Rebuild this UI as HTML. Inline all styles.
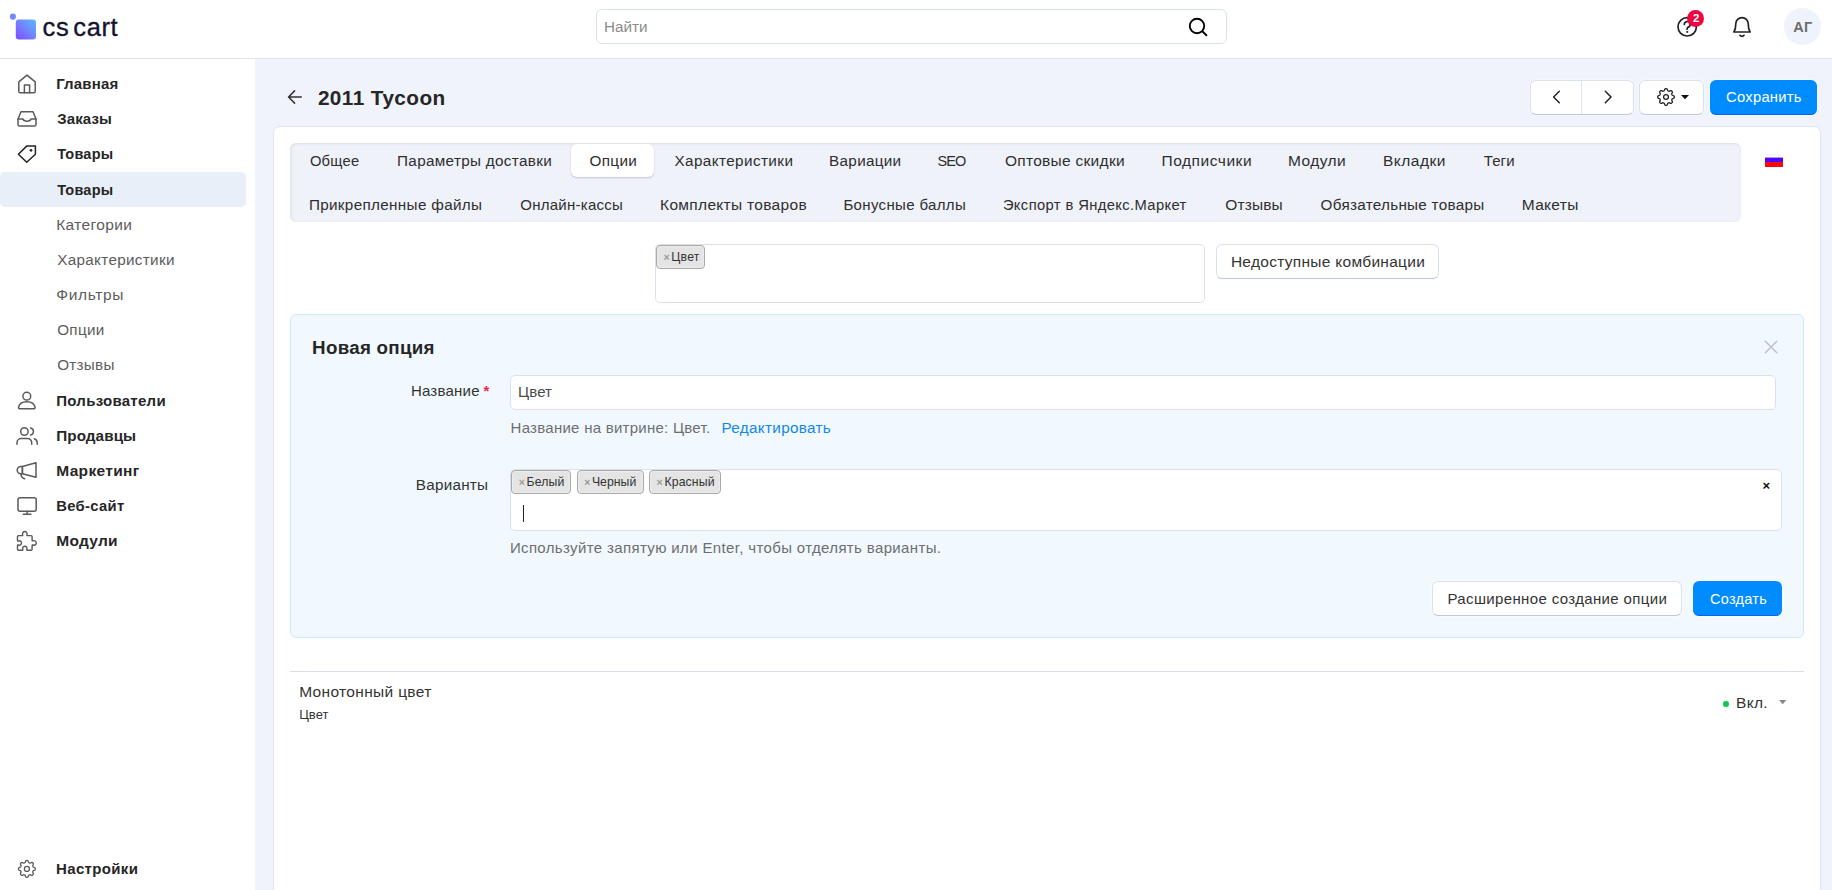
<!DOCTYPE html>
<html lang="ru">
<head>
<meta charset="utf-8">
<title>2011 Tycoon — Товары</title>
<style>
*{box-sizing:border-box;margin:0;padding:0}
html,body{width:1832px;height:890px;overflow:hidden}
body{position:relative;background:#f0f3fb;font-family:"Liberation Sans",sans-serif;font-size:15px;color:#333}
.t{position:absolute;line-height:1;white-space:pre;display:block;text-decoration:none}
.b{position:absolute;display:block}
.ic{position:absolute;display:block;overflow:visible}
ul{list-style:none}
.topbar{left:0;top:0;width:1832px;height:59px;background:#fff;border-bottom:1px solid #dde3f3}
.sidebar{left:0;top:59px;width:255px;height:831px;background:#fff}
.logo-t{-webkit-text-stroke:.35px #14142f}
.search{left:596px;top:9px;width:631px;height:35px;background:#fff;border:1px solid #d9e0f2;border-radius:6px}
.badge{left:1687.200px;top:9.900px;width:16.800px;height:16.800px;border-radius:50%;background:#f0043f}
.avatar{left:1784.200px;top:8.100px;width:36.600px;height:36.600px;border-radius:50%;background:#eff3fb}
.nav-active{left:0;top:172px;width:246px;height:35px;border-radius:5px;background:#e9eff9}
.btn{background:#fff;border:1px solid #dbe0f1;border-bottom-color:#bcc6e6;border-radius:6px;box-shadow:0 0 0 1px rgba(255,255,255,.35)}
.btn-primary{background:#008cff;border-radius:6px;border-bottom:1px solid #0064f6;box-shadow:0 0 0 1px rgba(255,255,255,.45)}
.card{left:273px;top:126px;width:1548px;height:790px;background:#fff;border:1px solid #dfe4f3;border-radius:7px}
.tabs{left:290px;top:143px;width:1451px;height:79px;background:#f0f2fa;border-radius:6px;box-shadow:inset 1px 1px 3px rgba(40,50,90,.10)}
.tab-active{left:571px;top:144px;width:83px;height:33px;background:#fff;border-radius:6px;box-shadow:0 1px 2px rgba(90,110,190,.35)}
.field{background:#fff;border:1px solid #dbe0f1;border-radius:5px}
.chip{background:#e4e4e4;border:1px solid #aaa;border-radius:4px;box-shadow:inset 0 0 2px #fff}
.panel{left:290px;top:314px;width:1514px;height:324px;background:#f1f9ff;border:1px solid #cbe9fb;border-radius:6px}
.hr{left:290px;top:671px;width:1514px;height:1px;background:#d8def0}
</style>
</head>
<body>

<header>
  <div class="b topbar"></div>
  <a class="brand">
    <svg class="ic" style="left:8px;top:12px" width="30" height="30" viewBox="8 12 30 30"><defs><linearGradient id="lg" x1="0" y1="1" x2="1" y2="0"><stop offset="0" stop-color="#8048ff"/><stop offset=".5" stop-color="#7383ff"/><stop offset="1" stop-color="#58baff"/></linearGradient></defs><circle cx="12.900" cy="16.650" r="3.050" fill="#6d8bff"/><rect x="15.800" y="19.400" width="20.200" height="20.100" rx="3" fill="url(#lg)"/></svg>
    <span class="t logo-t" style="left:42.6px;top:15px;font-size:25.5px;letter-spacing:0.58px;color:#14142f;word-spacing:-3.6px">cs cart</span>
  </a>
  <form role="search">
    <div class="b search"></div>
    <label class="t" style="left:604.0px;top:19px;font-size:15.25px;letter-spacing:0.03px;color:#8c8c8c">Найти</label>
    <svg class="ic" style="left:1184px;top:14px" width="28" height="26" viewBox="1184 14 28 26" fill="none" stroke="#000" stroke-width="1.9" stroke-linecap="round"><circle cx="1197" cy="26" r="7.200"/><path d="M1202.300 31.300l4.100 4"/></svg>
  </form>
  <div class="actions">
    <svg class="ic" style="left:1674px;top:14px" width="28" height="26" viewBox="1674 14 28 26" fill="none" stroke="#222" stroke-width="1.7" stroke-linecap="round" stroke-linejoin="round"><circle cx="1687.200" cy="26.800" r="9.200"/><path d="M1684.300 24.400a2.900 2.900 0 1 1 4 2.700c-.8.400-1.200.9-1.200 1.800v.3"/><circle cx="1687.100" cy="31.900" r=".6" fill="#222" stroke-width=".8"/></svg>
    <i class="b badge"></i><b class="t" style="left:1693.0px;top:13px;font-size:11.5px;font-weight:700;color:#ffffff">2</b>
    <svg class="ic" style="left:1730px;top:14px" width="26" height="26" viewBox="1730 14 26 26" fill="none" stroke="#222" stroke-width="1.7" stroke-linecap="round" stroke-linejoin="round"><path d="M1733.900 32h16.200c-1.400-2.300-1.900-5-1.900-8.200a6.200 6.200 0 0 0-12.400 0c0 3.200-.5 5.900-1.900 8.200z"/><path d="M1740 35.300c.5.800 1.200 1.100 2 1.100s1.500-.3 2-1.100"/></svg>
    <i class="b avatar"></i><b class="t" style="left:1793.2px;top:20px;font-size:14.5px;font-weight:700;letter-spacing:0.3px;color:#6e6e6e">АГ</b>
  </div>
</header>

<aside>
  <div class="b sidebar"></div>
  <div class="b nav-active"></div>
  <svg class="ic" style="left:14px;top:70px" width="28" height="28" viewBox="14 70 28 28" fill="none" stroke="#5a5a5a" stroke-width="1.5" stroke-linecap="round" stroke-linejoin="round"><path d="M18.8 91.400V81.900L27 75.100l8.200 6.800v9.500a1.300 1.300 0 0 1-1.300 1.300H20.100a1.300 1.300 0 0 1-1.300-1.300z"/><path d="M24.400 92.700v-7.800h5.200v7.800"/></svg>
<svg class="ic" style="left:14px;top:106px" width="28" height="26" viewBox="14 106 28 26" fill="none" stroke="#5a5a5a" stroke-width="1.5" stroke-linecap="round" stroke-linejoin="round"><path d="M18 119l3-7.2h12l3 7.2v5.4a1.6 1.6 0 0 1-1.6 1.6H19.6a1.6 1.6 0 0 1-1.6-1.6z"/><path d="M18 119h5c.4 1.400 1.800 2.200 4 2.200s3.600-.8 4-2.200h5"/></svg>
<svg class="ic" style="left:14px;top:141px" width="28" height="26" viewBox="14 141 28 26" fill="none" stroke="#222" stroke-width="1.5" stroke-linecap="round" stroke-linejoin="round"><path d="M35.4 146v8.200l-8.700 8.100-8.300-8.100 8.500-8.300z"/><circle cx="31" cy="150.300" r="1.350" fill="#222" stroke="none"/></svg>
<svg class="ic" style="left:14px;top:388px" width="28" height="26" viewBox="14 388 28 26" fill="none" stroke="#5a5a5a" stroke-width="1.5" stroke-linecap="round" stroke-linejoin="round"><circle cx="26.800" cy="396.200" r="3.900"/><path d="M18.500 407.500c.7-3.500 3.700-5.700 8.300-5.700s7.600 2.200 8.300 5.700a1 1 0 0 1-1 1.200H19.500a1 1 0 0 1-1-1.200z"/></svg>
<svg class="ic" style="left:13px;top:423px" width="28" height="26" viewBox="13 423 28 26" fill="none" stroke="#5a5a5a" stroke-width="1.5" stroke-linecap="round" stroke-linejoin="round"><circle cx="24.400" cy="431.500" r="3.700"/><path d="M17 444.300v-1.600a4.200 4.200 0 0 1 4.200-4.200h6.300a4.200 4.200 0 0 1 4.200 4.200v1.600"/><path d="M30.600 427.900a3.700 3.700 0 0 1 0 7.200"/><path d="M34.300 438.700a4.200 4.200 0 0 1 2.900 4v1.600"/></svg>
<svg class="ic" style="left:13px;top:458px" width="28" height="26" viewBox="13 458 28 26" fill="none" stroke="#5a5a5a" stroke-width="1.5" stroke-linecap="round" stroke-linejoin="round"><path d="M22.400 466.500l13.600-3.700v14.500l-13.600-3.600z"/><path d="M22.400 466.500h-1.600a3.600 3.600 0 0 0 0 7.200h1.600z"/><path d="M20.800 473.800c.2 2.600 1.600 4.400 3.800 5"/></svg>
<svg class="ic" style="left:13px;top:493px" width="28" height="26" viewBox="13 493 28 26" fill="none" stroke="#5a5a5a" stroke-width="1.5" stroke-linecap="round" stroke-linejoin="round"><rect x="18" y="497.800" width="18.200" height="13.400" rx="2"/><path d="M27.100 511.200v3M23.300 514.200h7.600"/></svg>
<svg class="ic" style="left:13px;top:527px" width="28" height="28" viewBox="13 527 28 28" fill="none" stroke="#5a5a5a" stroke-width="1.4" stroke-linecap="round" stroke-linejoin="round"><path d="M18.400 535.600h3.800c.5 0 .7-.4.500-.9a2.300 2.300 0 1 1 4.200 0c-.2.500 0 .9.500.9h3.800a.9.900 0 0 1 .9.900v3.800c0 .5.400.7.900.5a2.300 2.300 0 1 1 0 4.200c-.5-.2-.9 0-.9.500v3.800a.9.900 0 0 1-.9.900h-4c-.5 0-.6-.4-.4-.9a2.200 2.200 0 1 0-4 0c.2.500.1.900-.4.900h-4a.9.900 0 0 1-.9-.9v-3.900c0-.5.400-.6.900-.4a2.200 2.200 0 1 0 0-4c-.5.200-.9.100-.9-.4v-4a.9.900 0 0 1 .9-.9z"/></svg>
<svg class="ic" style="left:13px;top:855px" width="28" height="28" viewBox="13 855 28 28" fill="none" stroke="#5a5a5a" stroke-width="1.3" stroke-linecap="round" stroke-linejoin="round"><path d="M26.90 860.50 L27.17 860.51 L27.45 860.56 L27.71 860.65 L27.96 860.84 L28.18 861.15 L28.35 861.59 L28.50 862.04 L28.65 862.36 L28.82 862.57 L29.00 862.71 L29.19 862.81 L29.39 862.89 L29.59 862.97 L29.79 863.03 L30.02 863.07 L30.28 863.04 L30.62 862.92 L31.04 862.71 L31.47 862.52 L31.85 862.45 L32.16 862.49 L32.41 862.62 L32.64 862.78 L32.84 862.96 L33.02 863.16 L33.18 863.39 L33.31 863.64 L33.35 863.95 L33.28 864.33 L33.09 864.76 L32.88 865.18 L32.76 865.52 L32.73 865.78 L32.77 866.01 L32.83 866.21 L32.91 866.41 L32.99 866.61 L33.09 866.80 L33.23 866.98 L33.44 867.15 L33.76 867.30 L34.21 867.45 L34.65 867.62 L34.96 867.84 L35.15 868.09 L35.24 868.35 L35.29 868.63 L35.30 868.90 L35.29 869.17 L35.24 869.45 L35.15 869.71 L34.96 869.96 L34.65 870.18 L34.21 870.35 L33.76 870.50 L33.44 870.65 L33.23 870.82 L33.09 871.00 L32.99 871.19 L32.91 871.39 L32.83 871.59 L32.77 871.79 L32.73 872.02 L32.76 872.28 L32.88 872.62 L33.09 873.04 L33.28 873.47 L33.35 873.85 L33.31 874.16 L33.18 874.41 L33.02 874.64 L32.84 874.84 L32.64 875.02 L32.41 875.18 L32.16 875.31 L31.85 875.35 L31.47 875.28 L31.04 875.09 L30.62 874.88 L30.28 874.76 L30.02 874.73 L29.79 874.77 L29.59 874.83 L29.39 874.91 L29.19 874.99 L29.00 875.09 L28.82 875.23 L28.65 875.44 L28.50 875.76 L28.35 876.21 L28.18 876.65 L27.96 876.96 L27.71 877.15 L27.45 877.24 L27.17 877.29 L26.90 877.30 L26.63 877.29 L26.35 877.24 L26.09 877.15 L25.84 876.96 L25.62 876.65 L25.45 876.21 L25.30 875.76 L25.15 875.44 L24.98 875.23 L24.80 875.09 L24.61 874.99 L24.41 874.91 L24.21 874.83 L24.01 874.77 L23.78 874.73 L23.52 874.76 L23.18 874.88 L22.76 875.09 L22.33 875.28 L21.95 875.35 L21.64 875.31 L21.39 875.18 L21.16 875.02 L20.96 874.84 L20.78 874.64 L20.62 874.41 L20.49 874.16 L20.45 873.85 L20.52 873.47 L20.71 873.04 L20.92 872.62 L21.04 872.28 L21.07 872.02 L21.03 871.79 L20.97 871.59 L20.89 871.39 L20.81 871.19 L20.71 871.00 L20.57 870.82 L20.36 870.65 L20.04 870.50 L19.59 870.35 L19.15 870.18 L18.84 869.96 L18.65 869.71 L18.56 869.45 L18.51 869.17 L18.50 868.90 L18.51 868.63 L18.56 868.35 L18.65 868.09 L18.84 867.84 L19.15 867.62 L19.59 867.45 L20.04 867.30 L20.36 867.15 L20.57 866.98 L20.71 866.80 L20.81 866.61 L20.89 866.41 L20.97 866.21 L21.03 866.01 L21.07 865.78 L21.04 865.52 L20.92 865.18 L20.71 864.76 L20.52 864.33 L20.45 863.95 L20.49 863.64 L20.62 863.39 L20.78 863.16 L20.96 862.96 L21.16 862.78 L21.39 862.62 L21.64 862.49 L21.95 862.45 L22.33 862.52 L22.76 862.71 L23.18 862.92 L23.52 863.04 L23.78 863.07 L24.01 863.03 L24.21 862.97 L24.41 862.89 L24.61 862.81 L24.80 862.71 L24.98 862.57 L25.15 862.36 L25.30 862.04 L25.45 861.59 L25.62 861.15 L25.84 860.84 L26.09 860.65 L26.35 860.56 L26.63 860.51Z"/><circle cx="26.900" cy="868.900" r="2.500"/></svg>
  <ul>
    <li><a class="t" style="left:56.2px;top:76px;font-size:15px;font-weight:700;letter-spacing:0.17px;color:#262626">Главная</a></li>
    <li><a class="t" style="left:57.2px;top:111px;font-size:15px;font-weight:700;letter-spacing:0.14px;color:#262626">Заказы</a></li>
    <li><a class="t" style="left:57.2px;top:147px;font-size:14.5px;font-weight:700;letter-spacing:0.22px;color:#262626">Товары</a>
      <ul>
        <li><a class="t" style="left:57.2px;top:183px;font-size:14.5px;font-weight:700;letter-spacing:0.22px;color:#262626">Товары</a></li>
        <li><a class="t" style="left:56.2px;top:217px;font-size:15.5px;letter-spacing:0.39px;color:#5c5c5c">Категории</a></li>
        <li><a class="t" style="left:57.2px;top:252px;font-size:15.25px;letter-spacing:0.32px;color:#5c5c5c">Характеристики</a></li>
        <li><a class="t" style="left:56.2px;top:287px;font-size:15.5px;letter-spacing:0.67px;color:#5c5c5c">Фильтры</a></li>
        <li><a class="t" style="left:57.2px;top:322px;font-size:15.25px;letter-spacing:0.3px;color:#5c5c5c">Опции</a></li>
        <li><a class="t" style="left:57.2px;top:357px;font-size:15.25px;letter-spacing:0.26px;color:#5c5c5c">Отзывы</a></li>
      </ul>
    </li>
    <li><a class="t" style="left:56.2px;top:393px;font-size:15px;font-weight:700;letter-spacing:0.28px;color:#262626">Пользователи</a></li>
    <li><a class="t" style="left:56.2px;top:428px;font-size:15.25px;font-weight:700;letter-spacing:0.09px;color:#262626">Продавцы</a></li>
    <li><a class="t" style="left:56.2px;top:463px;font-size:15.5px;font-weight:700;letter-spacing:0.35px;color:#262626">Маркетинг</a></li>
    <li><a class="t" style="left:56.2px;top:499px;font-size:14.75px;font-weight:700;letter-spacing:0.34px;color:#262626">Веб-сайт</a></li>
    <li><a class="t" style="left:56.2px;top:533px;font-size:15.5px;font-weight:700;letter-spacing:0.28px;color:#262626">Модули</a></li>
    <li><a class="t" style="left:56.1px;top:861px;font-size:15px;font-weight:700;letter-spacing:0.33px;color:#262626">Настройки</a></li>
  </ul>
</aside>

<main>
  <div class="titlebar">
    <svg class="ic" style="left:284px;top:86px" width="22" height="22" viewBox="284 86 22 22" fill="none" stroke="#333" stroke-width="1.5" stroke-linecap="round" stroke-linejoin="round"><path d="M301.300 97h-12.700M294.600 90.900l-6.100 6.100 6.100 6.100"/></svg>
    <h1 class="t" style="left:317.9px;top:88px;font-size:20.75px;font-weight:700;letter-spacing:0.43px;color:#262626">2011 Tycoon</h1>
    <div class="b btn" style="left:1530px;top:80px;width:104px;height:35px"></div>
    <i class="b" style="left:1581px;top:81px;width:1px;height:33px;background:#dfe4f3"></i>
    <svg class="ic" style="left:1548px;top:88px" width="18" height="18" viewBox="1548 88 18 18" fill="none" stroke="#222" stroke-width="1.5" stroke-linecap="round" stroke-linejoin="round"><path d="M1559.300 91.300l-5.700 5.700 5.700 5.700"/></svg>
    <svg class="ic" style="left:1599px;top:88px" width="18" height="18" viewBox="1599 88 18 18" fill="none" stroke="#222" stroke-width="1.5" stroke-linecap="round" stroke-linejoin="round"><path d="M1605.300 91.300l5.700 5.700-5.700 5.700"/></svg>
    <div class="b btn" style="left:1639px;top:80px;width:65px;height:35px"></div>
    <svg class="ic" style="left:1652px;top:84px" width="28" height="26" viewBox="1652 84 28 26" fill="none" stroke="#222" stroke-width="1.3" stroke-linecap="round" stroke-linejoin="round"><path d="M1666.00 88.70 L1666.27 88.71 L1666.54 88.76 L1666.80 88.85 L1667.05 89.03 L1667.26 89.35 L1667.43 89.79 L1667.58 90.24 L1667.73 90.56 L1667.89 90.77 L1668.07 90.90 L1668.26 91.00 L1668.45 91.09 L1668.64 91.16 L1668.85 91.22 L1669.07 91.26 L1669.33 91.23 L1669.67 91.10 L1670.08 90.89 L1670.52 90.70 L1670.89 90.63 L1671.19 90.67 L1671.45 90.79 L1671.67 90.95 L1671.87 91.13 L1672.05 91.33 L1672.21 91.55 L1672.33 91.81 L1672.37 92.11 L1672.30 92.48 L1672.11 92.92 L1671.90 93.33 L1671.77 93.67 L1671.74 93.93 L1671.78 94.15 L1671.84 94.36 L1671.91 94.55 L1672.00 94.74 L1672.10 94.93 L1672.23 95.11 L1672.44 95.27 L1672.76 95.42 L1673.21 95.57 L1673.65 95.74 L1673.97 95.95 L1674.15 96.20 L1674.24 96.46 L1674.29 96.73 L1674.30 97.00 L1674.29 97.27 L1674.24 97.54 L1674.15 97.80 L1673.97 98.05 L1673.65 98.26 L1673.21 98.43 L1672.76 98.58 L1672.44 98.73 L1672.23 98.89 L1672.10 99.07 L1672.00 99.26 L1671.91 99.45 L1671.84 99.64 L1671.78 99.85 L1671.74 100.07 L1671.77 100.33 L1671.90 100.67 L1672.11 101.08 L1672.30 101.52 L1672.37 101.89 L1672.33 102.19 L1672.21 102.45 L1672.05 102.67 L1671.87 102.87 L1671.67 103.05 L1671.45 103.21 L1671.19 103.33 L1670.89 103.37 L1670.52 103.30 L1670.08 103.11 L1669.67 102.90 L1669.33 102.77 L1669.07 102.74 L1668.85 102.78 L1668.64 102.84 L1668.45 102.91 L1668.26 103.00 L1668.07 103.10 L1667.89 103.23 L1667.73 103.44 L1667.58 103.76 L1667.43 104.21 L1667.26 104.65 L1667.05 104.97 L1666.80 105.15 L1666.54 105.24 L1666.27 105.29 L1666.00 105.30 L1665.73 105.29 L1665.46 105.24 L1665.20 105.15 L1664.95 104.97 L1664.74 104.65 L1664.57 104.21 L1664.42 103.76 L1664.27 103.44 L1664.11 103.23 L1663.93 103.10 L1663.74 103.00 L1663.55 102.91 L1663.36 102.84 L1663.15 102.78 L1662.93 102.74 L1662.67 102.77 L1662.33 102.90 L1661.92 103.11 L1661.48 103.30 L1661.11 103.37 L1660.81 103.33 L1660.55 103.21 L1660.33 103.05 L1660.13 102.87 L1659.95 102.67 L1659.79 102.45 L1659.67 102.19 L1659.63 101.89 L1659.70 101.52 L1659.89 101.08 L1660.10 100.67 L1660.23 100.33 L1660.26 100.07 L1660.22 99.85 L1660.16 99.64 L1660.09 99.45 L1660.00 99.26 L1659.90 99.07 L1659.77 98.89 L1659.56 98.73 L1659.24 98.58 L1658.79 98.43 L1658.35 98.26 L1658.03 98.05 L1657.85 97.80 L1657.76 97.54 L1657.71 97.27 L1657.70 97.00 L1657.71 96.73 L1657.76 96.46 L1657.85 96.20 L1658.03 95.95 L1658.35 95.74 L1658.79 95.57 L1659.24 95.42 L1659.56 95.27 L1659.77 95.11 L1659.90 94.93 L1660.00 94.74 L1660.09 94.55 L1660.16 94.36 L1660.22 94.15 L1660.26 93.93 L1660.23 93.67 L1660.10 93.33 L1659.89 92.92 L1659.70 92.48 L1659.63 92.11 L1659.67 91.81 L1659.79 91.55 L1659.95 91.33 L1660.13 91.13 L1660.33 90.95 L1660.55 90.79 L1660.81 90.67 L1661.11 90.63 L1661.48 90.70 L1661.92 90.89 L1662.33 91.10 L1662.67 91.23 L1662.93 91.26 L1663.15 91.22 L1663.36 91.16 L1663.55 91.09 L1663.74 91.00 L1663.93 90.90 L1664.11 90.77 L1664.27 90.56 L1664.42 90.24 L1664.57 89.79 L1664.74 89.35 L1664.95 89.03 L1665.20 88.85 L1665.46 88.76 L1665.73 88.71Z"/><circle cx="1666" cy="97" r="2.400"/></svg>
    <svg class="ic" style="left:1680px;top:93px" width="10" height="8" viewBox="1680 93 10 8"><path d="M1681 95h8l-4 4.200z" fill="#111"/></svg>
    <div class="b btn-primary" style="left:1710px;top:80px;width:107px;height:35px"></div>
    <span class="t" style="left:1726.1px;top:90px;font-size:14.75px;letter-spacing:0.26px;color:#ffffff">Сохранить</span>
  </div>

  <section>
    <div class="b card"></div>
    <nav>
      <div class="b tabs"></div>
      <div class="b tab-active"></div>
      <a class="t" style="left:309.9px;top:154px;font-size:14.75px;letter-spacing:0.25px;color:#2e2e2e">Общее</a><a class="t" style="left:397.1px;top:153px;font-size:15.25px;letter-spacing:0.32px;color:#2e2e2e">Параметры доставки</a><a class="t" style="left:589.4px;top:153px;font-size:15.25px;letter-spacing:0.38px;color:#2e2e2e">Опции</a><a class="t" style="left:674.5px;top:153px;font-size:15.25px;letter-spacing:0.41px;color:#2e2e2e">Характеристики</a><a class="t" style="left:829.1px;top:153px;font-size:15.25px;letter-spacing:0.3px;color:#2e2e2e">Вариации</a><a class="t" style="left:937.6px;top:154px;font-size:14.5px;letter-spacing:-0.95px;color:#2e2e2e">SEO</a><a class="t" style="left:1004.9px;top:153px;font-size:15.5px;letter-spacing:0.29px;color:#2e2e2e">Оптовые скидки</a><a class="t" style="left:1161.6px;top:153px;font-size:15.5px;letter-spacing:0.52px;color:#2e2e2e">Подписчики</a><a class="t" style="left:1287.9px;top:153px;font-size:15.5px;letter-spacing:0.46px;color:#2e2e2e">Модули</a><a class="t" style="left:1383.0px;top:153px;font-size:15.5px;letter-spacing:0.48px;color:#2e2e2e">Вкладки</a><a class="t" style="left:1483.8px;top:153px;font-size:15px;letter-spacing:0.07px;color:#2e2e2e">Теги</a>
      <a class="t" style="left:308.9px;top:197px;font-size:15.25px;letter-spacing:0.33px;color:#2e2e2e">Прикрепленные файлы</a><a class="t" style="left:520.3px;top:197px;font-size:15px;letter-spacing:0.25px;color:#2e2e2e">Онлайн-кассы</a><a class="t" style="left:660.1px;top:197px;font-size:15.5px;letter-spacing:0.31px;color:#2e2e2e">Комплекты товаров</a><a class="t" style="left:843.4px;top:197px;font-size:15px;letter-spacing:0.35px;color:#2e2e2e">Бонусные баллы</a><a class="t" style="left:1002.9px;top:198px;font-size:14.75px;letter-spacing:0.38px;color:#2e2e2e">Экспорт в Яндекс.Маркет</a><a class="t" style="left:1225.3px;top:197px;font-size:15.5px;letter-spacing:0.12px;color:#2e2e2e">Отзывы</a><a class="t" style="left:1320.6px;top:197px;font-size:15.25px;letter-spacing:0.28px;color:#2e2e2e">Обязательные товары</a><a class="t" style="left:1521.8px;top:197px;font-size:15.5px;letter-spacing:0.3px;color:#2e2e2e">Макеты</a>
    </nav>
    <svg class="ic" style="left:1765px;top:154px" width="18" height="13" viewBox="0 0 18 13"><rect width="18" height="3.700" fill="#f4f3fd"/><rect y="1.200" width="18" height="2.400" fill="#ffffff"/><rect y="3.600" width="18" height="4.500" fill="#4d05fb"/><rect y="8" width="18" height="5" fill="#fb0410"/></svg>

    <div class="picker">
      <div class="b field" style="left:655px;top:244px;width:550px;height:59px"></div>
      <div class="b chip" style="left:656px;top:245px;width:49px;height:24px"></div>
      <span class="t" style="left:663.6px;top:252px;font-size:10.5px;font-weight:700;color:#999999">×</span><span class="t" style="left:671.3px;top:251px;font-size:12.25px;letter-spacing:0.2px;color:#333333">Цвет</span>
      <div class="b btn" style="left:1216px;top:244px;width:223px;height:35px"></div>
      <a class="t" style="left:1230.9px;top:254px;font-size:15.5px;letter-spacing:0.29px;color:#333333">Недоступные комбинации</a>
    </div>

    <div class="new-option">
      <div class="b panel"></div>
      <h4 class="t" style="left:312.1px;top:339px;font-size:18.75px;font-weight:700;letter-spacing:0.28px;color:#262626">Новая опция</h4>
      <svg class="ic" style="left:1762px;top:338px" width="18" height="18" viewBox="1762 338 18 18" fill="none" stroke="#bcc2c7" stroke-width="1.5" stroke-linecap="round"><path d="M1765.300 341.300l11.500 11.500M1776.800 341.300l-11.500 11.500"/></svg>
      <label class="t" style="left:410.9px;top:383px;font-size:15px;letter-spacing:0.23px;color:#333333">Название</label><span class="t" style="left:483.5px;top:383px;font-size:15px;font-weight:700;color:#f81d4c">*</span>
      <div class="b field" style="left:510px;top:375px;width:1266px;height:35px"></div>
      <span class="t" style="left:518.1px;top:384px;font-size:15px;letter-spacing:0.07px;color:#4a4a4a">Цвет</span>
      <p class="t" style="left:510.6px;top:420px;font-size:15px;letter-spacing:0.26px;color:#6e6e6e">Название на витрине: Цвет.</p><a class="t" style="left:721.5px;top:420px;font-size:15.25px;letter-spacing:0.33px;color:#1187e8">Редактировать</a>
      <label class="t" style="left:415.8px;top:477px;font-size:15.25px;letter-spacing:0.24px;color:#333333">Варианты</label>
      <div class="b field" style="left:510px;top:469px;width:1272px;height:62px"></div>
      <div class="b chip" style="left:511px;top:470px;width:60px;height:24px"></div><span class="t" style="left:518.8px;top:477px;font-size:10.5px;font-weight:700;color:#999999">×</span><span class="t" style="left:526.6px;top:476px;font-size:12.25px;letter-spacing:0.13px;color:#333333">Белый</span>
      <div class="b chip" style="left:577px;top:470px;width:67px;height:24px"></div><span class="t" style="left:584.3px;top:477px;font-size:10.5px;font-weight:700;color:#999999">×</span><span class="t" style="left:591.9px;top:476px;font-size:12.25px;letter-spacing:0.04px;color:#333333">Черный</span>
      <div class="b chip" style="left:649px;top:470px;width:72px;height:24px"></div><span class="t" style="left:656.4px;top:477px;font-size:10.5px;font-weight:700;color:#999999">×</span><span class="t" style="left:664.5px;top:476px;font-size:12.25px;letter-spacing:0.12px;color:#333333">Красный</span>
      <i class="b" style="left:523px;top:505px;width:1px;height:17px;background:#222"></i>
      <span class="t" style="left:1762.6px;top:479px;font-size:13px;font-weight:700;color:#111111">×</span>
      <p class="t" style="left:509.9px;top:540px;font-size:15px;letter-spacing:0.36px;color:#6e6e6e">Используйте запятую или Enter, чтобы отделять варианты.</p>
      <div class="b btn" style="left:1432px;top:581px;width:250px;height:35px"></div>
      <a class="t" style="left:1447.5px;top:591px;font-size:15px;letter-spacing:0.36px;color:#333333">Расширенное создание опции</a>
      <div class="b btn-primary" style="left:1693px;top:581px;width:89px;height:35px"></div>
      <span class="t" style="left:1710.0px;top:592px;font-size:14.5px;letter-spacing:0.27px;color:#ffffff">Создать</span>
    </div>

    <div class="options-list">
      <i class="b hr"></i>
      <a class="t" style="left:299.2px;top:684px;font-size:15.5px;letter-spacing:0.33px;color:#333333">Монотонный цвет</a>
      <small class="t" style="left:299.2px;top:708px;font-size:13px;letter-spacing:0.07px;color:#333333">Цвет</small>
      <i class="b" style="left:1722.700px;top:700.500px;width:6px;height:6px;border-radius:50%;background:#0ac84a"></i>
      <a class="t" style="left:1736.0px;top:695px;font-size:15.5px;letter-spacing:0.3px;color:#333333">Вкл.</a>
      <svg class="ic" style="left:1778px;top:699px" width="10" height="7" viewBox="1778 699 10 7"><path d="M1779 700h7.400l-3.700 4.200z" fill="#8a8a8a"/></svg>
    </div>
  </section>
</main>
</body>
</html>
